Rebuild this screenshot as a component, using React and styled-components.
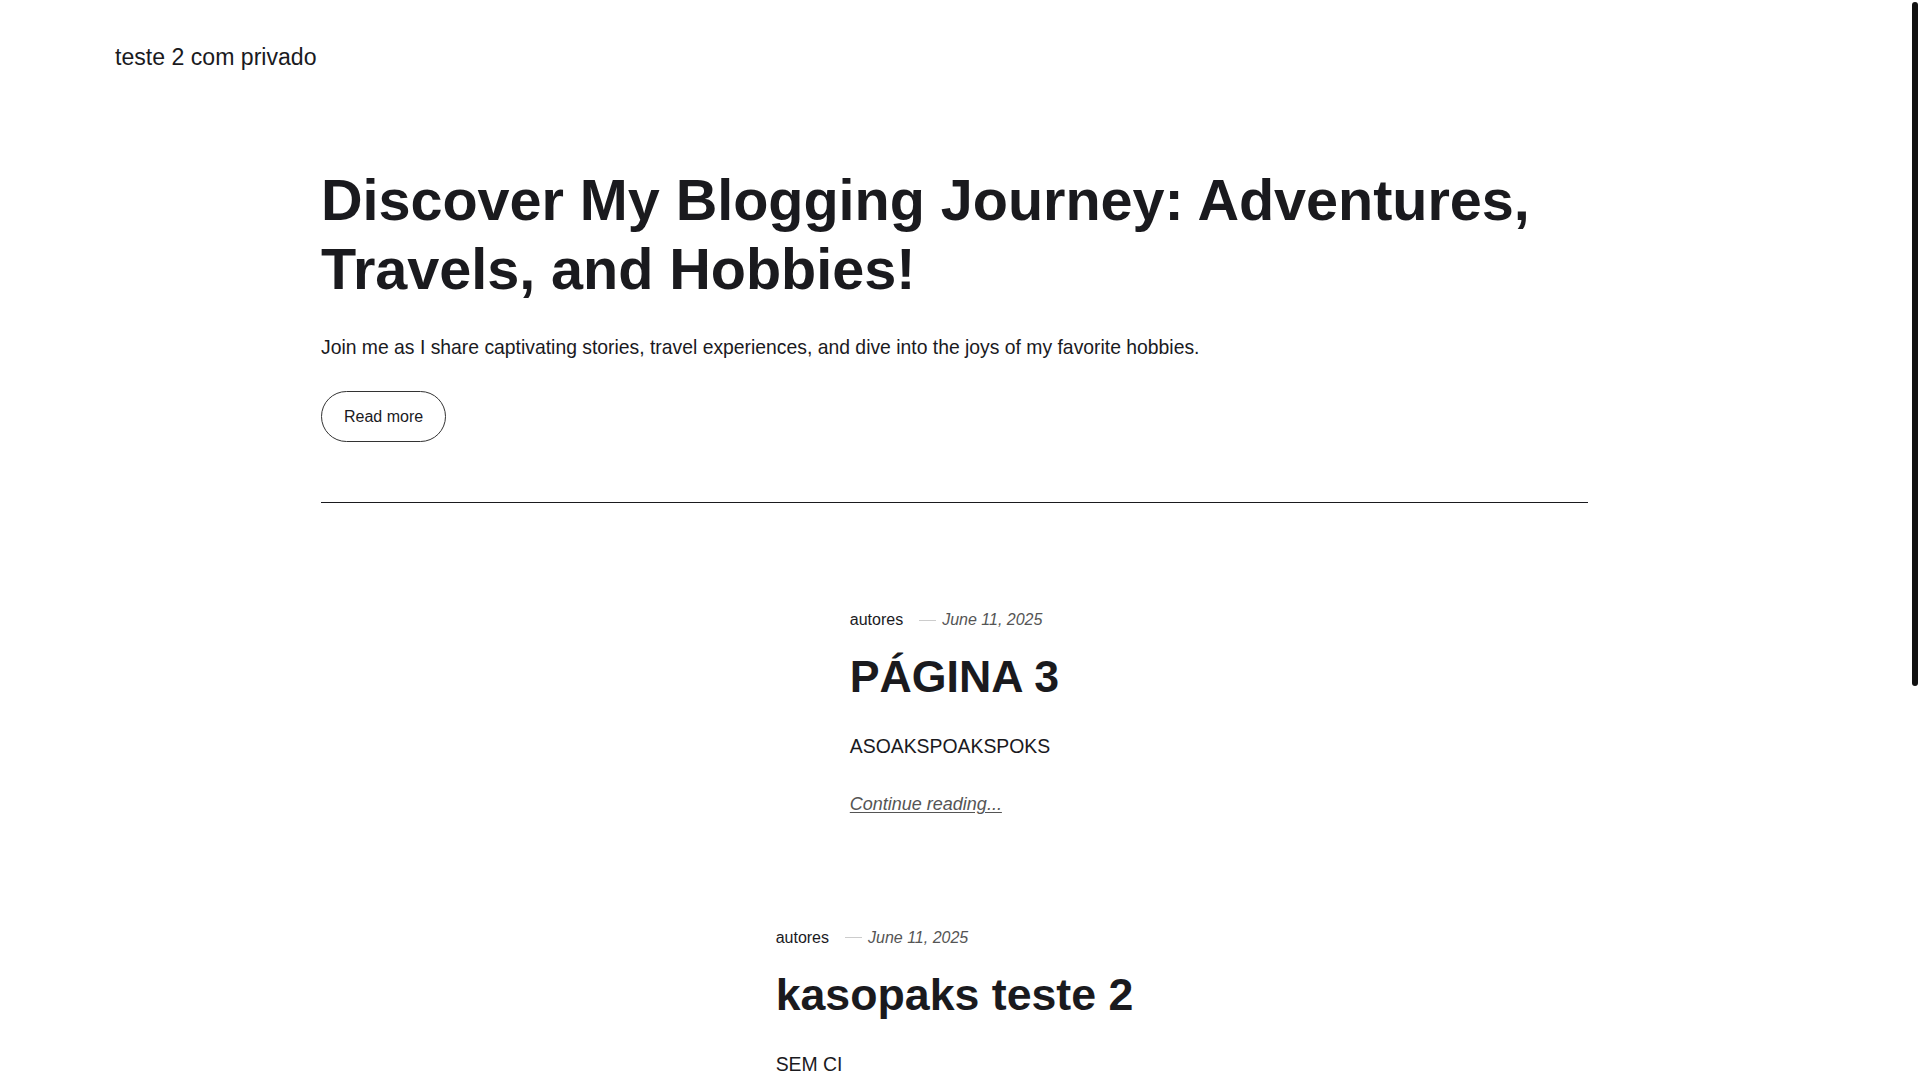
import React from "react";
import styled, { createGlobalStyle } from "styled-components";

const GlobalStyle = createGlobalStyle`
    html, body {
        margin: 0;
        padding: 0;
        background: #ffffff;
    }
    body {
        font-family: "Liberation Sans", Arial, sans-serif;
        color: #1a1a1e;
    }
`

const Page = styled.div`
    width: 1920px;
    min-height: 1080px;
    overflow: hidden;
`

const Header = styled.header`
    padding: 40px 115px 0;
    height: 72px;
`

const SiteTitle = styled.a`
    font-size: 23.1px;
    line-height: 1.5;
    color: #1a1a1e;
    text-decoration: none;
`

const Main = styled.main`
    padding: 54px 332px 0 321px;
`

const Hero = styled.section`
    display: flex;
    flex-direction: column;
    align-items: flex-start;
    padding-bottom: 60px;
    border-bottom: 1px solid #1a1a1e;
`

const HeroTitle = styled.h1`
    margin: 0;
    font-size: 57.6px;
    line-height: 1.2;
    font-weight: 700;
    letter-spacing: -0.05px;
`

const Lead = styled.p`
    margin: 29px 0 0;
    font-size: 19.35px;
    line-height: 1.5;
`

const Button = styled.a`
    margin-top: 29px;
    display: inline-flex;
    align-items: center;
    height: 51px;
    box-sizing: border-box;
    padding: 0 22px;
    border: 1px solid #333;
    border-radius: 999px;
    font-size: 16px;
    color: #1a1a1e;
    text-decoration: none;
`

const Posts = styled.div`
    display: flex;
    flex-direction: column;
    padding-top: ${p => p.$top}px;
    gap: 108px;
`

const Post = styled.article`
    display: flex;
    justify-content: center;
`

const PostBody = styled.div`
    display: flex;
    flex-direction: column;
    align-items: flex-start;
`

const Meta = styled.div`
    display: flex;
    align-items: center;
    font-size: 16px;
    line-height: 1.5;
`

const Author = styled.span`
    color: #1a1a1e;
`

const PostDate = styled.time`
    display: flex;
    align-items: center;
    margin-left: 16px;
    font-style: italic;
    color: #555;

    &::before {
        content: "";
        width: 17px;
        height: 1px;
        margin-right: 6px;
        background: #ccc;
    }
`

const PostTitle = styled.h2`
    margin: 18px 0 0;
    font-size: 44.7px;
    line-height: 1.2;
    font-weight: 700;
`

const Excerpt = styled.p`
    margin: 28px 0 0;
    font-size: 19.4px;
    line-height: 1.5;
`

const MoreLink = styled.a`
    margin-top: 30px;
    font-size: 18px;
    line-height: 1.5;
    font-style: italic;
    color: #555;
    text-decoration: underline;
    text-underline-offset: 2px;
`

const ScrollThumb = styled.div`
    position: fixed;
    top: 2px;
    right: 2px;
    width: 6px;
    height: 684px;
    border-radius: 3px;
    background: #111;
`

const posts = [
    { title: "PÁGINA 3", excerpt: "ASOAKSPOAKSPOKS", more: true },
    { title: "kasopaks teste 2", excerpt: "SEM CI", more: false },
]

const App = () => {
    return (
        <Page>
            <GlobalStyle />
            <Header>
                <SiteTitle href="#">teste 2 com privado</SiteTitle>
            </Header>
            <Main>
                <Hero>
                    <HeroTitle>
                        Discover My Blogging Journey: Adventures,<br />
                        Travels, and Hobbies!
                    </HeroTitle>
                    <Lead>Join me as I share captivating stories, travel experiences, and dive into the joys of my favorite hobbies.</Lead>
                    <Button href="#">Read more</Button>
                </Hero>
                <Posts $top={105}>
                    {posts.map(post => (
                        <Post key={post.title}>
                            <PostBody>
                                <Meta>
                                    <Author>autores</Author>
                                    <PostDate>June 11, 2025</PostDate>
                                </Meta>
                                <PostTitle>{post.title}</PostTitle>
                                <Excerpt>{post.excerpt}</Excerpt>
                                {post.more && <MoreLink href="#">Continue reading...</MoreLink>}
                            </PostBody>
                        </Post>
                    ))}
                </Posts>
            </Main>
            <ScrollThumb />
        </Page>
    )
}

export default App;
